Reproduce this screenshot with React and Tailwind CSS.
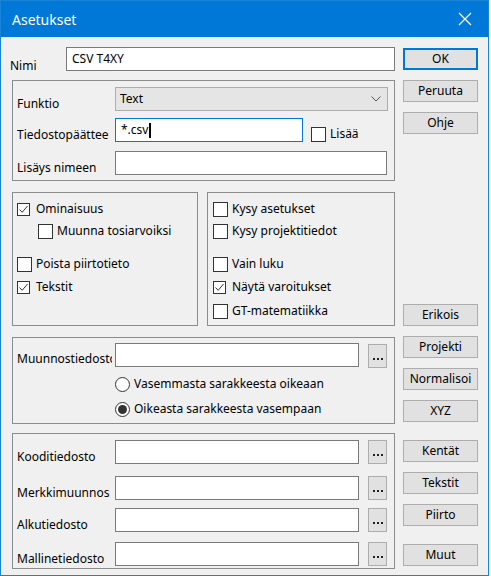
import React from 'react';

const font = { fontFamily: '"Noto Sans", "Liberation Sans", sans-serif' };

const Btn = ({ label, primary, className = '' }) => (
    <div
        className={`h-[22px] w-[75px] flex items-center justify-center text-[12px] text-black bg-[#e1e1e1] ${primary ? 'border-2 border-[#0078d7]' : 'border border-[#adadad]'} ${className}`}
    >
        {label}
    </div>
);

const Dots = ({ className = '' }) => (
    <div className={`w-[19px] h-[24px] ml-[9px] flex items-end justify-center gap-[2px] pb-[7px] bg-[#e1e1e1] border border-[#adadad] ${className}`}>
        <span className="w-[2px] h-[2px] bg-[#222]" />
        <span className="w-[2px] h-[2px] bg-[#222]" />
        <span className="w-[2px] h-[2px] bg-[#222]" />
    </div>
);

const Input = ({ w, value, focused, cursor, className = '' }) => (
    <div
        className={`h-[24px] bg-white flex items-center px-[5px] text-[12px] text-black border ${focused ? 'border-[#0078d7]' : 'border-[#7a7a7a]'} ${className}`}
        style={{ width: w }}
    >
        {value}
        {cursor && <span className="inline-block w-[2px] h-[15px] bg-black ml-[1px]" />}
    </div>
);

const CheckMark = () => (
    <svg width="11" height="11" viewBox="0 0 11 11">
        <path d="M1.5 5.5 L4.2 8.3 L9.5 2" fill="none" stroke="#333" strokeWidth="1" />
    </svg>
);

const Check = ({ label, checked, indent = 0, className = '' }) => (
    <div className={`h-[18px] flex items-center ${className}`} style={{ paddingLeft: indent }}>
        <div className="w-[19px] flex items-center">
            {checked ? (
                <div className="w-[13px] h-[13px] border border-[#333] bg-white flex items-center justify-center">
                    <CheckMark />
                </div>
            ) : (
                <div className="w-[15px] h-[15px] border border-[#333] bg-white" />
            )}
        </div>
        <span className="text-[12px] text-black leading-[16px]">{label}</span>
    </div>
);

const Radio = ({ label, checked, className = '' }) => (
    <div className={`h-[18px] flex items-center ${className}`}>
        <div className="w-[19px] flex items-center">
            <div className="w-[15px] h-[15px] rounded-full border border-[#333] bg-white flex items-center justify-center">
                {checked && <div className="w-[9px] h-[9px] rounded-full bg-[#333]" />}
            </div>
        </div>
        <span className="text-[12px] text-black leading-[16px]">{label}</span>
    </div>
);

const Label = ({ children, w = 98, mt = 9 }) => (
    <div className="text-[12px] leading-[16px] text-black whitespace-nowrap overflow-hidden shrink-0" style={{ width: w, marginTop: mt }}>
        {children}
    </div>
);

const FileRow = ({ label, className = '' }) => (
    <div className={`flex items-start ${className}`}>
        <Label>{label}</Label>
        <Input w={244} className="h-[23px]" />
        <Dots className="h-[23px]" />
    </div>
);

export default function App() {
    return (
        <div className="w-[491px] h-[576px] bg-[#f2f2f2] flex" style={font}>
            <div className="w-[489px] h-[576px] border border-[#1883d7] bg-[#f0f0f0] flex flex-col">
                {/* Title bar */}
                <div className="h-[36px] bg-[#0078d7] flex items-center justify-between pl-[11px] pr-[16px] shrink-0">
                    <span className="text-white text-[14px]">Asetukset</span>
                    <svg width="14" height="14" viewBox="0 0 14 14">
                        <path d="M1 1 L13 13 M13 1 L1 13" stroke="white" strokeWidth="1.2" />
                    </svg>
                </div>

                <div className="flex pl-[9px]">
                    {/* Left column */}
                    <div className="w-[385px] flex flex-col">
                        <div className="mt-[10px] h-[24px] flex items-start">
                            <div className="w-[56px] text-[12px] leading-[16px] mt-[11px]">Nimi</div>
                            <Input w={329} value="CSV T4XY" />
                        </div>

                        {/* Group 1 */}
                        <div className="ml-[2px] mt-[9px] h-[101px] border border-[#8c8c8c] pl-[4px] pt-[6px] flex flex-col">
                            <div className="flex items-start h-[24px]">
                                <Label>Funktio</Label>
                                <div className="w-[273px] h-[24px] bg-[#e5e5e5] border border-[#adadad] flex items-center justify-between pl-[4px] pr-[6px] text-[12px]">
                                    <span>Text</span>
                                    <svg width="10" height="6" viewBox="0 0 10 6">
                                        <path d="M0.5 0.5 L5 5 L9.5 0.5" fill="none" stroke="#555" strokeWidth="1" />
                                    </svg>
                                </div>
                            </div>
                            <div className="flex items-start h-[24px] mt-[7px]">
                                <Label>Tiedostopäättee</Label>
                                <Input w={188} value="*.csv" focused cursor />
                                <Check label="Lisää" className="ml-[8px] mt-[7px]" />
                            </div>
                            <div className="flex items-start h-[24px] mt-[9px]">
                                <Label>Lisäys nimeen</Label>
                                <Input w={272} />
                            </div>
                        </div>

                        {/* Group 2 */}
                        <div className="ml-[2px] mt-[11px] h-[134px] flex gap-[9px]">
                            <div className="w-[186px] border border-[#8c8c8c] pl-[4px] pt-[7px] flex flex-col">
                                <Check label="Ominaisuus" checked />
                                <Check label="Muunna tosiarvoiksi" indent={21} className="mt-[4px]" />
                                <Check label="Poista piirtotieto" className="mt-[15px]" />
                                <Check label="Tekstit" checked className="mt-[5px]" />
                            </div>
                            <div className="w-[188px] border border-[#8c8c8c] pl-[5px] pt-[7px] flex flex-col">
                                <Check label="Kysy asetukset" />
                                <Check label="Kysy projektitiedot" className="mt-[4px]" />
                                <Check label="Vain luku" className="mt-[15px]" />
                                <Check label="Näytä varoitukset" checked className="mt-[5px]" />
                                <Check label="GT-matematiikka" className="mt-[6px]" />
                            </div>
                        </div>

                        {/* Group 3 */}
                        <div className="ml-[2px] mt-[11px] h-[87px] border border-[#8c8c8c] pl-[4px] pt-[5px] flex flex-col">
                            <div className="flex items-start">
                                <Label w={95} mt={8}>Muunnostiedosto</Label>
                                <Input w={244} className="ml-[3px]" />
                                <Dots className="mt-[1px]" />
                            </div>
                            <div className="pl-[98px] mt-[7px] flex flex-col">
                                <Radio label="Vasemmasta sarakkeesta oikeaan" />
                                <Radio label="Oikeasta sarakkeesta vasempaan" checked className="mt-[7px]" />
                            </div>
                        </div>

                        {/* Group 4 */}
                        <div className="ml-[2px] mt-[9px] h-[136px] border border-[#8c8c8c] pl-[4px] pt-[6px] flex flex-col">
                            <FileRow label="Kooditiedosto" />
                            <FileRow label="Merkkimuunnos" className="mt-[11px]" />
                            <FileRow label="Alkutiedosto" className="mt-[7px]" />
                            <FileRow label="Mallinetiedosto" className="mt-[9px]" />
                        </div>
                    </div>

                    {/* Right column */}
                    <div className="ml-[8px] mt-[11px] flex flex-col">
                        <Btn label="OK" primary />
                        <Btn label="Peruuta" className="mt-[10px]" />
                        <Btn label="Ohje" className="mt-[10px]" />
                        <Btn label="Erikois" className="mt-[170px]" />
                        <Btn label="Projekti" className="mt-[10px]" />
                        <Btn label="Normalisoi" className="mt-[10px]" />
                        <Btn label="XYZ" className="mt-[10px]" />
                        <Btn label="Kentät" className="mt-[18px]" />
                        <Btn label="Tekstit" className="mt-[10px]" />
                        <Btn label="Piirto" className="mt-[10px]" />
                        <Btn label="Muut" className="mt-[18px]" />
                    </div>
                </div>
            </div>
        </div>
    );
}
